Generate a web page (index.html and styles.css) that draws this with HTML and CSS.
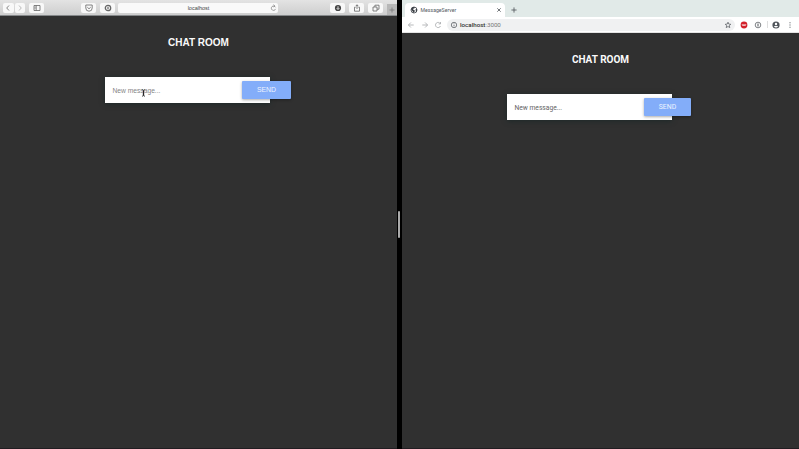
FILE: index.html
```html
<!DOCTYPE html>
<html lang="en">
<head>
<meta charset="utf-8">
<title>MessageServer</title>
<link rel="stylesheet" href="styles.css">
</head>
<body>
<main class="split">
  <section class="window safari">
    <header class="safari-bar">
      <div class="group nav">
        <span class="btn half"><svg viewBox="0 0 8 8"><path d="M5 1.5 2.7 4 5 6.500"/></svg></span>
        <span class="btn half dim"><svg viewBox="0 0 8 8"><path d="M3 1.500 5.300 4 3 6.500"/></svg></span>
      </div>
      <span class="btn sidebar"><svg viewBox="0 0 8 8"><path d="M1 1.500h6v5H1zM3.200 1.500v5M1.700 3h.8M1.700 4.200h.8"/></svg></span>
      <span class="btn pocket"><svg viewBox="0 0 8 8"><path d="M.8 1h6.400v3a3.200 3.200 0 0 1-6.400 0zM2.300 3.200 4 4.800l1.700-1.600"/></svg></span>
      <span class="btn lock"><svg viewBox="0 0 8 8"><circle cx="4" cy="4" r="2.700" stroke-width="1.300"/><path d="M4 2.800v2.400" stroke-width="1.200"/></svg></span>
      <div class="safari-address"><span>localhost</span><svg class="reload" viewBox="0 0 8 8"><path d="M6.300 3.200A2.500 2.500 0 1 0 6.400 5M4 .2l1.500 1.400L4 2.800"/></svg></div>
      <span class="btn download"><svg viewBox="0 0 8 8"><circle cx="4" cy="4" r="3.100" fill="#444" stroke="none"/><path class="arrow" d="M4 2.200v3M2.700 4.200 4 5.500l1.300-1.300"/></svg></span>
      <span class="btn share"><svg viewBox="0 0 8 8"><path d="M2.700 3.200H1.500v4h5v-4H5.300M4 5V.8M2.800 2 4 .8 5.200 2"/></svg></span>
      <span class="btn tabs"><svg viewBox="0 0 8 8"><path d="M1 3h4v4H1zM2.900 3V1.200H7v4H5"/></svg></span>
      <span class="new-tab"><svg viewBox="0 0 8 8"><path d="M4 1.500v5M1.500 4h5"/></svg></span>
    </header>
    <div class="page">
      <h1>CHAT ROOM</h1>
      <form class="composer">
        <span class="placeholder">New message...</span>
        <span class="send">SEND</span>
        <svg class="cursor" viewBox="0 0 5 8"><path d="M1 .8q1.500 0 1.500 1v4.400q0 1-1.500 1M4 .8q-1.500 0-1.500 1v4.400q0 1 1.500 1M1.600 5h1.800"/></svg>
      </form>
    </div>
  </section>
  <div class="divider"><span class="grip"></span></div>
  <section class="window chrome">
    <header class="tab-strip">
      <div class="tab">
        <svg class="globe" viewBox="0 0 8 8"><circle cx="4" cy="4" r="3" fill="#fff" stroke="#3c4147" stroke-width=".8"/><path fill="#3c4147" stroke="none" d="M1 3.200 2.800 1l2 .1-.3 1.200-1.300.5.1 1 1.400.4v1.200L3.500 7 2.700 5.500zM5.400 3.400 7 2.800v2.400L5.700 6.200l.2-1.500z"/></svg>
        <span class="tab-title">MessageServer</span>
        <svg class="close" viewBox="0 0 8 8"><path d="m2.300 2.300 3.400 3.400M5.700 2.300 2.300 5.700"/></svg>
      </div>
      <svg class="plus" viewBox="0 0 8 8"><path d="M4 1.400v5.200M1.400 4h5.200"/></svg>
    </header>
    <div class="chrome-bar">
      <svg class="dim" viewBox="0 0 8 8"><path d="M6.700 4H1.500M3.900 1.500 1.400 4l2.500 2.500"/></svg>
      <svg class="dim" viewBox="0 0 8 8"><path d="M1.300 4h5.200M4.100 1.500 6.600 4 4.100 6.500"/></svg>
      <svg class="dim" viewBox="0 0 8 8"><path d="M6.300 2.600A2.600 2.600 0 1 0 6.500 5M6.500 1v1.900H4.600"/></svg>
      <div class="omnibox">
        <svg viewBox="0 0 8 8"><circle cx="4" cy="4" r="2.700"/><path d="M4 3.700v1.700M4 2.400v.6"/></svg>
        <span class="url"><b>localhost</b>:3000</span>
        <svg class="star" viewBox="0 0 8 8"><path d="m4 1.200.8 1.900 2 .2-1.500 1.300.5 2L4 5.500 2.200 6.600l.5-2-1.500-1.300 2-.2z"/></svg>
      </div>
      <svg class="ext" viewBox="0 0 8 8"><circle cx="4" cy="4" r="3.400" fill="#d3222c" stroke="none"/><path stroke="#fff" d="m2.100 3.200 1 1.700L4 3.300l.9 1.600 1-1.700"/></svg>
      <svg class="ext onepass" viewBox="0 0 8 8"><circle cx="4" cy="4" r="2.800"/><path d="M4 2.500v3" stroke-width="1.100"/></svg>
      <span class="rule"></span>
      <svg class="avatar" viewBox="0 0 8 8"><circle cx="4" cy="4" r="3.600" fill="#50555b" stroke="none"/><circle cx="4" cy="2.900" r="1.200" fill="#fff" stroke="none"/><path fill="#fff" stroke="none" d="M1.800 5.600q2.200-1.700 4.400 0Q4 7.600 1.800 5.600"/></svg>
      <svg class="more" viewBox="0 0 8 8"><path fill="#555a5f" stroke="none" d="M3.500 1.200h1v1h-1zM3.500 3.500h1v1h-1zM3.500 5.800h1v1h-1z"/></svg>
    </div>
    <div class="page">
      <h1>CHAT ROOM</h1>
      <form class="composer">
        <span class="placeholder">New message...</span>
        <span class="send">SEND</span>
      </form>
    </div>
  </section>
</main>
</body>
</html>
```
FILE: styles.css
```css
* { box-sizing: border-box; }
body { margin: 0; background: #000; overflow: hidden; }
svg { display: block; flex: none; width: 8px; height: 8px; fill: none; stroke: #5f6368; stroke-width: .8; }
.split { display: grid; grid-template-columns: 397px 5px 397px; height: 449px; }
.window { display: flex; flex-direction: column; min-width: 0; background: #303030; border-bottom: 1px solid #211d21; }
.safari { font-family: "Liberation Sans", sans-serif; }
.chrome { font-family: Roboto, sans-serif; }

.safari-bar { display: flex; align-items: flex-start; height: 16px; padding: 3px 0 0 3px; background: linear-gradient(#e3e3e3, #cecece); border-bottom: 1px solid #85888a; }
.btn { display: flex; align-items: center; justify-content: center; width: 15px; height: 10px; border-radius: 2px; background: #f8f8f8; }
.btn svg { stroke: #666; }
.btn .arrow { stroke: #fff; }
.group { display: flex; gap: 1px; }
.half { width: 10.500px; }
.half.dim svg { stroke: #aaa; }
.sidebar { margin-left: 4px; }
.pocket { margin-left: 37px; }
.lock { margin-left: 4px; }
.safari-address { position: relative; display: flex; align-items: center; justify-content: center; width: 160px; height: 10px; margin-left: 3px; padding-left: 1px; border-radius: 2px; background: #f9f9f9; color: #444; font-size: 5.500px; line-height: 10px; }
.reload { position: absolute; right: 1px; top: 1px; width: 7px; height: 8px; }
.safari-address .reload { stroke: #777; }
.download { margin-left: 52px; }
.share { margin-left: 4px; }
.tabs { margin-left: 4px; }
.new-tab { display: flex; align-items: center; justify-content: center; width: 10px; height: 11px; margin: 1px 0 0 auto; background: #b7b7b7; }
.new-tab svg { stroke: #777; }

.page { display: flex; flex: 1; flex-direction: column; align-items: center; }
h1 { margin: 21px 0 0; height: 12px; color: #fafafa; font-size: 10px; font-weight: 700; line-height: 12px; white-space: nowrap; }
.composer { position: relative; display: flex; align-items: center; width: 165px; height: 26px; margin: 28px 22px 0 0; padding-left: 7.500px; background: #fff; box-shadow: 0 1px 5px #1c2929; }
.placeholder { flex: none; width: 129.500px; padding-top: 1px; color: #858585; font-size: 6.700px; line-height: 10px; white-space: nowrap; }
.send { flex: none; width: 49px; height: 17.500px; border-radius: 1px; background: #83adf9; color: #edf3ff; font-size: 6.900px; line-height: 18px; text-align: center; box-shadow: 0 1px 3px #0005; }
.cursor { position: absolute; left: 36px; top: 12px; width: 5px; height: 8px; stroke: #222; }
.chrome .placeholder { color: #656565; font-size: 6.700px; }
.chrome .send { width: 47px; height: 18px; font-size: 6.900px; line-height: 19px; }

.divider { display: flex; align-items: center; justify-content: center; background: #000; }
.grip { width: 2px; height: 27px; margin-right: 1px; border-radius: 1px; background: #aaa; }

.tab-strip { display: flex; align-items: flex-start; height: 17px; padding: 3px 0 0 3px; background: #e1eae8; }
.tab { display: flex; align-items: center; width: 100px; height: 14px; padding: 0 2px 0 5px; border-radius: 4px 4px 0 0; background: #fff; }
.globe { width: 8px; height: 8px; }
.tab-title { flex: 1; margin-left: 2.500px; color: #555a5f; font-size: 5.200px; line-height: 8px; }
.plus { margin: 3px 0 0 5px; }
.plus, .close { stroke: #4d5257; }
.chrome-bar { display: flex; align-items: center; height: 16px; padding-left: 5px; background: #fff; border-bottom: 1px solid #e4e4e4; }
.dim { stroke: #a4a7aa; }
.chrome-bar > .dim + .dim { margin-left: 5.500px; }
.omnibox { display: flex; align-items: center; width: 288px; height: 12px; margin-left: 5px; padding: 0 3px 0 3px; border-radius: 6px; background: #f0f1f2; }
.url { flex: 1; margin-left: 2px; color: #777; font-size: 6.200px; line-height: 10px; }
.url b { color: #333; font-weight: 500; }
.ext { margin-left: 5px; }
.onepass { margin-left: 5.500px; }
.rule { width: 1px; height: 7px; margin-left: 5px; background: #dedede; }
.avatar { margin-left: 4.500px; }
.more { margin-left: 5.500px; }
```
